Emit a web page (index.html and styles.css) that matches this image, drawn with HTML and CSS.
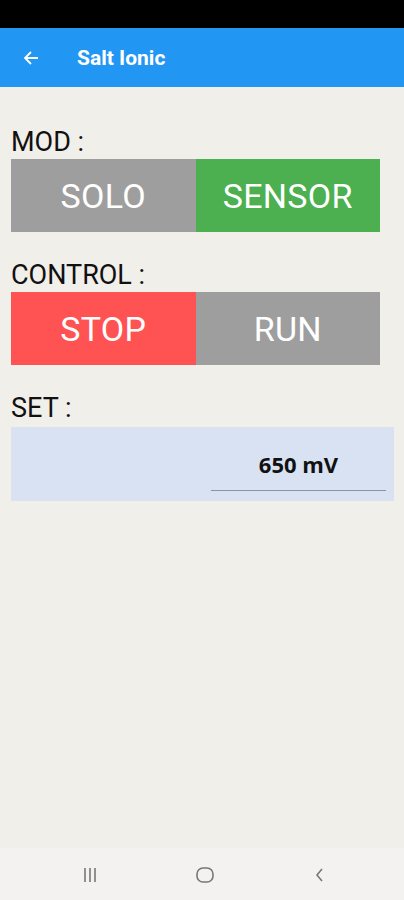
FILE: index.html
```html
<!DOCTYPE html>
<html lang="en">
<head>
	<meta charset="UTF-8">
	<title>Salt Ionic</title>
	<link rel="stylesheet" href="styles.css">
</head>
<body>
	<div class="status"></div>
	<div class="bar">
		<svg class="back" width="18" height="18" viewBox="0 0 18 18"><path d="M16 9H3M9 3L3 9l6 6" fill="none" stroke="#fff" stroke-width="1.8"/></svg>
		<span class="title">Salt Ionic</span>
	</div>

	<div class="main">
		<div class="label">MOD :</div>
		<div class="row">
			<div class="btn grey">SOLO</div>
			<div class="btn green">SENSOR</div>
		</div>

		<div class="label">CONTROL :</div>
		<div class="row">
			<div class="btn red">STOP</div>
			<div class="btn grey">RUN</div>
		</div>

		<div class="label">SET :</div>
		<div class="set">
			<div class="field">650 mV</div>
		</div>
	</div>

	<div class="nav">
		<svg width="18" height="18" viewBox="0 0 18 18"><path d="M4 2v14M9 2v14M14 2v14" stroke="#777" stroke-width="1.6"/></svg>
		<svg width="20" height="20" viewBox="0 0 20 20"><rect x="2" y="3" width="16" height="14" rx="6" fill="none" stroke="#777" stroke-width="1.6"/></svg>
		<svg width="18" height="18" viewBox="0 0 18 18"><path d="M11 3L6 9l5 6" fill="none" stroke="#777" stroke-width="1.6"/></svg>
	</div>
</body>
</html>
```

FILE: styles.css
```css
*{margin:0; padding:0; box-sizing:border-box;}
body{width:404px; height:900px; background:#f1efea; font-family:Roboto, "Noto Sans", sans-serif; display:flex; flex-direction:column; overflow:hidden;}

.status{height:28px; background:#000;}
.bar{height:59px; background:#2196f3; display:flex; align-items:center; padding-left:22px; color:#fff;}
.back{margin-right:37px;}
.title{font-size:21px; font-weight:bold; font-family:Roboto, sans-serif;}

.main{flex:1; padding:40px 10px 0 11px;}
.label{font-size:27px; color:#111; height:33px; line-height:33px; margin-top:-1px;}
.row{display:flex; width:369px; height:73px; margin-bottom:28px;}
.btn{flex:1; display:flex; align-items:center; justify-content:center; color:#fff; font-size:34px; letter-spacing:0.3px;}
.grey{background:#9e9e9e;}
.green{background:#4caf50;}
.red{background:#ff5252;}

.set{height:74px; background:#d9e2f2; display:flex; justify-content:flex-end; padding:0 8px 10px 0; margin-top:2px;}
.field{width:175px; border-bottom:1.5px solid #8a94a3; display:flex; align-items:center; justify-content:center; font-weight:bold; font-size:22px; font-family:"Open Sans", sans-serif; color:#111; padding-top:10px;}

.nav{height:52px; background:#f3f2f0; display:flex; justify-content:center; align-items:center; gap:96px; padding-top:2px; padding-left:6px;}
```
